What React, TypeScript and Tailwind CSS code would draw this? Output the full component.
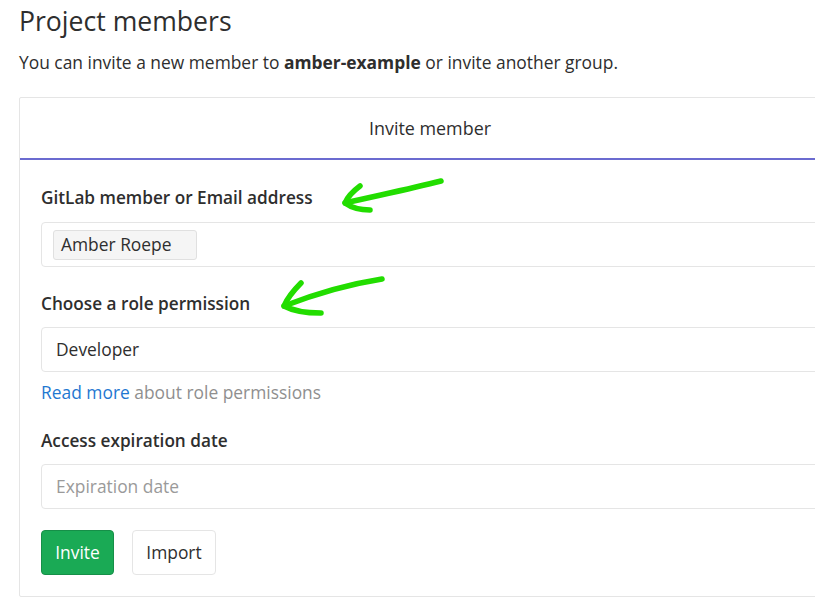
import React from "react";

export default function App() {
  return (
    <div
      className="relative w-[815px] h-[600px] overflow-hidden bg-white text-[#2e2e2e]"
      style={{ fontFamily: '"Open Sans", "Noto Sans", sans-serif' }}
    >
      <div className="pl-[19px] pt-[3px]">
        <h1 className="text-[26.6px] leading-[36px] font-normal text-[#2e2e2e]">Project members</h1>
        <p className="mt-[11px] text-[17.4px] leading-[24px] text-[#2e2e2e] whitespace-nowrap">
          You can invite a new member to <span className="font-bold">amber-example</span> or invite another group.
        </p>
        <div className="mt-[23px] w-[822px] border border-[#e5e5e5] rounded-[2px]">
          <div className="h-[62px] flex items-center justify-center border-b-2 border-[#6b6bd0] text-[17.9px]">
            Invite member
          </div>
          <div className="px-[21px] pt-[26px] pb-[21px]">
            <label className="block h-[24px] text-[17.2px] font-semibold leading-[24px] whitespace-nowrap">
              GitLab member or Email address
            </label>
            <div className="mt-[12px] h-[45px] border border-[#e5e5e5] rounded-[4px] flex items-center px-[11px]">
              <span className="h-[30px] w-[144px] px-[7px] flex items-center bg-[#f5f5f5] border border-[#e0e0e0] rounded-[3px] text-[17.4px] text-[#2e2e2e] whitespace-nowrap">
                Amber Roepe
              </span>
            </div>
            <label className="block h-[24px] mt-[25px] text-[17.2px] font-semibold leading-[24px] whitespace-nowrap">
              Choose a role permission
            </label>
            <div className="mt-[11px] h-[45px] border border-[#e5e5e5] rounded-[4px] flex items-center px-[14px] text-[17.4px]">
              Developer
            </div>
            <p className="mt-[8px] h-[24px] text-[17.4px] leading-[24px] text-[#8f8f8f] whitespace-nowrap">
              <span className="text-[#1f78d1]">Read more</span> about role permissions
            </p>
            <label className="block h-[24px] mt-[25px] text-[17.2px] font-semibold leading-[24px] whitespace-nowrap">
              Access expiration date
            </label>
            <div className="mt-[11px] h-[45px] border border-[#e5e5e5] rounded-[4px] flex items-center px-[14px] text-[17.4px] text-[#9a9a9a]">
              Expiration date
            </div>
            <div className="mt-[21px] flex gap-[18px]">
              <button className="h-[45px] w-[73px] rounded-[4px] bg-[#1aaa55] border border-[#168f48] text-white text-[17.4px]">
                Invite
              </button>
              <button className="h-[45px] w-[84px] rounded-[4px] bg-white border border-[#e5e5e5] text-[#2e2e2e] text-[17.4px]">
                Import
              </button>
            </div>
          </div>
        </div>
      </div>
      <svg className="absolute left-0 top-0 pointer-events-none" width="815" height="600" viewBox="0 0 815 600">
        <g fill="none" stroke="#22dd00" strokeWidth="5.5" strokeLinecap="round" strokeLinejoin="round">
          <path d="M441 181 C 410 189, 375 196, 345 203" />
          <path d="M360 186 C 352 192, 347 198, 345 203 C 352 208, 362 210, 370 210" />
          <path d="M382 279 C 350 284, 315 294, 284 306" />
          <path d="M301 283 C 293 291, 287 299, 284 306 C 295 312, 310 313, 321 313" />
        </g>
      </svg>
    </div>
  );
}
